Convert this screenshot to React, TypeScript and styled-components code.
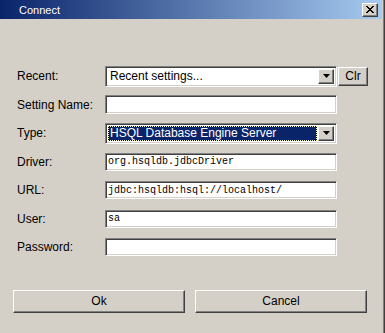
import React from 'react';
import styled, { createGlobalStyle, css } from 'styled-components';

const GlobalStyle = createGlobalStyle`
    html, body {
        margin: 0;
        padding: 0;
        background: #d4d0c8;
    }
    body {
        font-family: "Liberation Sans", Arial, sans-serif;
        font-size: 12px;
        color: #000;
    }
`;

const sunken = css`
    box-sizing: border-box;
    border: 1px solid;
    border-color: #808080 #ffffff #ffffff #808080;
    box-shadow: inset 1px 1px 0 #404040, inset -1px -1px 0 #d4d0c8;
`;

const raised = css`
    box-sizing: border-box;
    border: 1px solid;
    border-color: #ffffff #404040 #404040 #ffffff;
    box-shadow: inset -1px -1px 0 #808080;
    background: #d4d0c8;
`;

const Window = styled.div`
    width: 385px;
    height: 333px;
    box-sizing: border-box;
    border-right: 1px solid #404040;
    background: #d4d0c8;
`;

const Frame = styled.div`
    height: 100%;
    box-sizing: border-box;
    border-right: 1px solid #808080;
    padding-right: 1px;
    display: flex;
    flex-direction: column;
`;

const TitleBar = styled.div`
    height: 19px;
    display: flex;
    align-items: center;
    justify-content: space-between;
    padding: 0 4px 0 19px;
    background: linear-gradient(to right, #0a246a, #a6caf0);
`;

const Title = styled.span`
    color: #ffffff;
    font-size: 11px;
`;

const CloseButton = styled.div`
    ${raised};
    width: 16px;
    height: 14px;
    display: flex;
    align-items: center;
    justify-content: center;
`;

const Form = styled.div`
    display: grid;
    grid-template-columns: 88px 232px 31px;
    grid-auto-rows: 28.5px;
    align-items: center;
    padding: 43px 0 0 17px;
`;

const Label = styled.div`
    grid-column: 1;
    font-size: 12px;
`;

const Field = styled.div<{ $h: number }>`
    ${sunken};
    grid-column: 2;
    height: ${(p) => p.$h}px;
    background: #ffffff;
    display: flex;
    align-items: center;
    padding: 2px 2px 2px 2px;
    font-family: "Liberation Mono", "Courier New", monospace;
    font-size: 10px;
    white-space: nowrap;
    overflow: hidden;
`;

const Combo = styled(Field)`
    font-family: "Liberation Sans", Arial, sans-serif;
    font-size: 12px;
    padding: 2px;
    gap: 1px;
`;

const ComboText = styled.div<{ $selected?: boolean }>`
    flex: 1;
    height: 100%;
    box-sizing: border-box;
    display: flex;
    align-items: center;
    padding-left: 2px;
    ${(p) =>
        p.$selected &&
        css`
            padding: 1px;
            background: repeating-conic-gradient(#000000 0 25%, #ffffc0 0 50%) 0 0 / 2px 2px;
        `}
`;

const Selection = styled.div`
    width: 100%;
    height: 100%;
    background: #0a246a;
    color: #ffffff;
    display: flex;
    align-items: center;
    padding-left: 1px;
`;

const ArrowButton = styled.div`
    ${raised};
    width: 16px;
    height: 100%;
    display: flex;
    align-items: center;
    justify-content: center;
`;

const SmallButton = styled.div`
    ${raised};
    grid-column: 3;
    margin-left: 1px;
    width: 30px;
    height: 19px;
    display: flex;
    align-items: center;
    justify-content: center;
    font-size: 12px;
`;

const ButtonRow = styled.div`
    display: flex;
    gap: 10px;
    padding: 28px 0 0 13px;
`;

const Button = styled.div`
    ${raised};
    width: 172px;
    height: 23px;
    display: flex;
    align-items: center;
    justify-content: center;
    font-size: 12px;
`;

function DownArrow() {
    return (
        <svg width="7" height="4" viewBox="0 0 7 4">
            <path d="M0 0h7L3.5 4z" fill="#000" />
        </svg>
    );
}

function CloseGlyph() {
    return (
        <svg width="8" height="7" viewBox="0 0 8 7" shapeRendering="crispEdges">
            <path
                d="M0 0h2v1h1v1h2V1h1V0h2v1H7v1H6v1H5v1h1v1h1v1h1v1H6V6H5V5H3v1H2v1H0V6h1V5h1V4h1V3H2V2H1V1H0z"
                fill="#000"
            />
        </svg>
    );
}

export default function App() {
    return (
        <>
            <GlobalStyle />
            <Window>
                <Frame>
                    <TitleBar>
                        <Title>Connect</Title>
                        <CloseButton>
                            <CloseGlyph />
                        </CloseButton>
                    </TitleBar>

                    <Form>
                        <Label>Recent:</Label>
                        <Combo $h={21}>
                            <ComboText>Recent settings...</ComboText>
                            <ArrowButton>
                                <DownArrow />
                            </ArrowButton>
                        </Combo>
                        <SmallButton>Clr</SmallButton>

                        <Label>Setting Name:</Label>
                        <Field $h={19} />

                        <Label>Type:</Label>
                        <Combo $h={21}>
                            <ComboText $selected>
                                <Selection>HSQL Database Engine Server</Selection>
                            </ComboText>
                            <ArrowButton>
                                <DownArrow />
                            </ArrowButton>
                        </Combo>

                        <Label>Driver:</Label>
                        <Field $h={18}>org.hsqldb.jdbcDriver</Field>

                        <Label>URL:</Label>
                        <Field $h={18}>jdbc:hsqldb:hsql://localhost/</Field>

                        <Label>User:</Label>
                        <Field $h={18}>sa</Field>

                        <Label>Password:</Label>
                        <Field $h={18} />
                    </Form>

                    <ButtonRow>
                        <Button>Ok</Button>
                        <Button>Cancel</Button>
                    </ButtonRow>
                </Frame>
            </Window>
        </>
    );
}
